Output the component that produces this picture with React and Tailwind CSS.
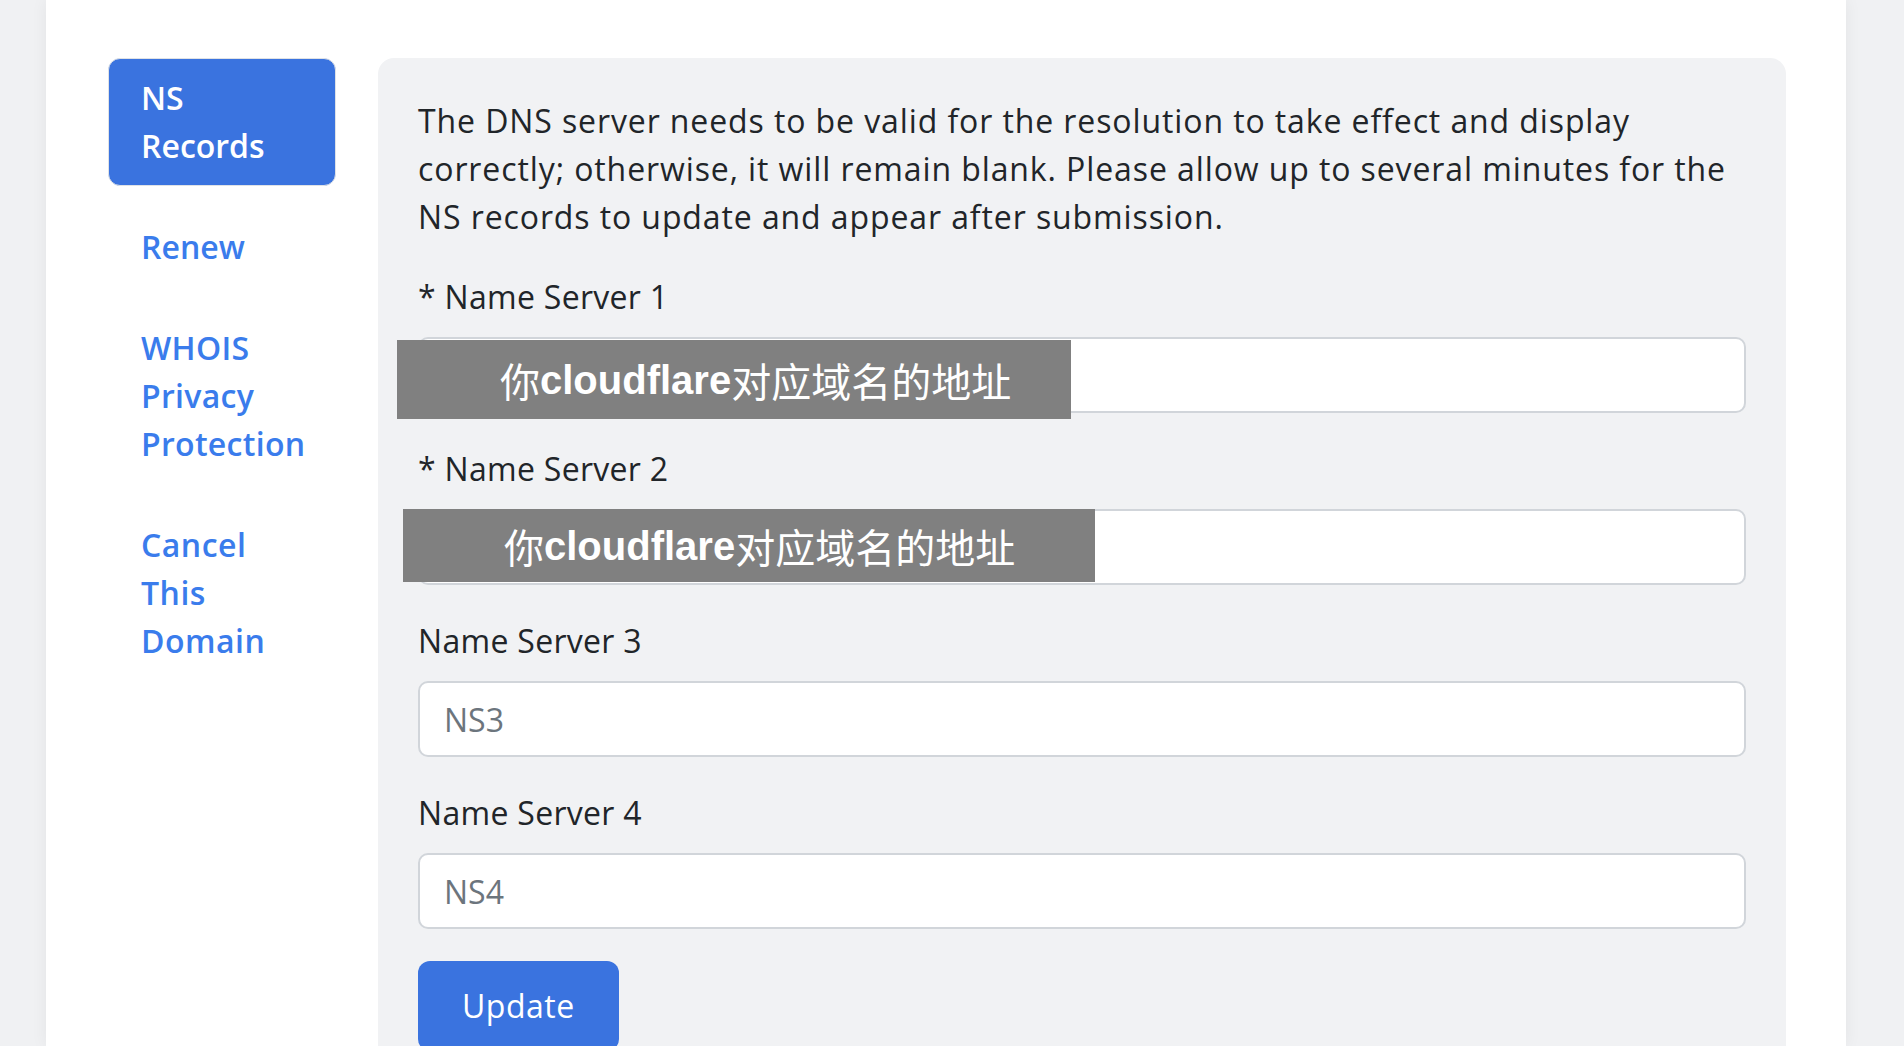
import React from "react";

const font = { fontFamily: '"Open Sans", "Noto Sans CJK SC", sans-serif' };

function Field({ label, placeholder, overlay }) {
  return (
    <div className="mb-[32px]">
      <div className="text-[32px] leading-[48px] text-[#212529] mb-[16px] tracking-[0.3px]">{label}</div>
      <div className="relative">
        <input
          placeholder={placeholder}
          className="w-full h-[76px] rounded-[10px] border-2 border-[#d1d5da] bg-white px-[24px] text-[32px] text-[#212529] placeholder:text-[#6c757d] outline-none"
        />
        {overlay}
      </div>
    </div>
  );
}

function Cover({ cls }) {
  return (
    <div
      className={"absolute bg-[#808080] text-white text-[40px] leading-none flex items-center " + cls}
      style={{ fontFamily: '"Noto Sans CJK SC", "Liberation Sans", sans-serif' }}
    >
      <span>你</span>
      <span className="font-bold" style={{ fontFamily: '"Liberation Sans", sans-serif' }}>cloudflare</span>
      <span>对应域名的地址</span>
    </div>
  );
}

export default function App() {
  return (
    <div className="h-[1046px] overflow-hidden bg-[#f0f1f3]" style={font}>
      <div className="ml-[46px] w-[1800px] h-full bg-white shadow-[0_0_16px_rgba(0,0,0,0.06)] flex pt-[58px] pl-[62px] gap-[42px]">
        <nav className="w-[228px] shrink-0 flex flex-col gap-[21px] text-[32px] leading-[48px] font-semibold">
          <a className="block rounded-[12px] bg-[#3a73df] border border-[#dfe2e6] text-white px-[32px] py-[15px]">
            NS<br />Records
          </a>
          <a className="block px-[33px] py-[16px] text-[#3a7cec]">Renew</a>
          <a className="block px-[33px] py-[16px] text-[#3a7cec] tracking-[0.3px]">
            WHOIS<br />Privacy<br />Protection
          </a>
          <a className="block px-[33px] py-[16px] text-[#3a7cec] tracking-[0.5px]">
            Cancel<br />This<br />Domain
          </a>
        </nav>
        <main className="w-[1408px] shrink-0 bg-[#f1f2f4] rounded-t-[16px] px-[40px] pt-[39px]">
          <p className="text-[32px] leading-[48px] text-[#212529] mb-[32px] tracking-[0.9px]">
            <span className="block whitespace-nowrap">The DNS server needs to be valid for the resolution to take effect and display</span>
            <span className="block whitespace-nowrap">correctly; otherwise, it will remain blank. Please allow up to several minutes for the</span>
            <span className="block whitespace-nowrap">NS records to update and appear after submission.</span>
          </p>
          <Field
            label="* Name Server 1"
            placeholder="NS1"
            overlay={<Cover cls="left-[-21px] top-[3px] w-[674px] h-[79px] pl-[103px]" />}
          />
          <Field
            label="* Name Server 2"
            placeholder="NS2"
            overlay={<Cover cls="left-[-15px] top-0 w-[692px] h-[73px] pl-[101px]" />}
          />
          <Field label="Name Server 3" placeholder="NS3" />
          <Field label="Name Server 4" placeholder="NS4" />
          <button className="bg-[#3a73df] text-white rounded-[12px] px-[44px] py-[21px] text-[32px] leading-[48px] tracking-[0.5px]">
            Update
          </button>
        </main>
      </div>
    </div>
  );
}
